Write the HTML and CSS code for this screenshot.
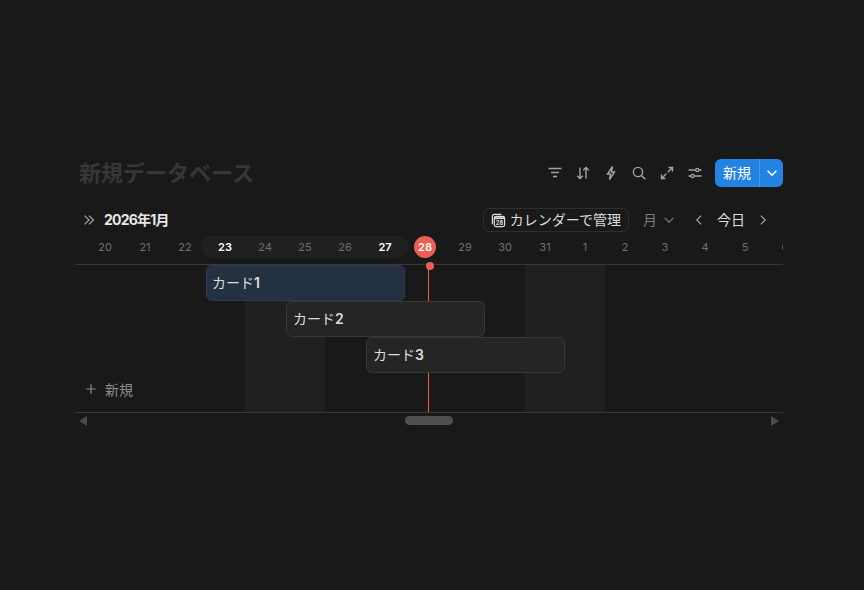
FILE: index.html
```html
<!DOCTYPE html>
<html lang="ja">
<head>
  <meta charset="UTF-8" />
  <title>新規データベース</title>
  <link rel="stylesheet" href="styles.css">
</head>
<body>

  <div class="view">

    <div class="title-row">
      <h1>新規データベース</h1>
      <div class="tools">
        <span class="tool">
          <svg viewBox="0 0 16 16"><path d="M1.5 3.5h13M4 7.5h8M6 11.5h4"/></svg>
        </span>
        <span class="tool">
          <svg viewBox="0 0 16 16"><path d="M5 2.5v11M2.2 10.7 5 13.5l2.8-2.8M11 13.5v-11M8.2 5.3 11 2.5l2.8 2.8"/></svg>
        </span>
        <span class="tool">
          <svg viewBox="0 0 16 16"><path d="M9.5 1.5 4.5 9h3l-1 5.5L11.5 7h-3z"/></svg>
        </span>
        <span class="tool">
          <svg viewBox="0 0 16 16"><circle cx="7" cy="7" r="4.6"/><path d="m10.4 10.4 3.9 3.9"/></svg>
        </span>
        <span class="tool">
          <svg viewBox="0 0 16 16"><path d="M9.5 2.5h4v4M13.5 2.5l-4.8 4.8M6.5 13.5h-4v-4M2.5 13.5l4.8-4.8"/></svg>
        </span>
        <span class="tool">
          <svg viewBox="0 0 16 16"><path d="M1.5 5h7.2M12 5h2.5M1.5 11H4M7.3 11h7.2"/><circle cx="10.3" cy="5" r="1.6"/><circle cx="5.6" cy="11" r="1.6"/></svg>
        </span>
        <div class="new-btn">
          <span class="new-label">新規</span>
          <span class="new-arrow">
            <svg viewBox="0 0 16 16"><path d="m3 5.5 5 5 5-5"/></svg>
          </span>
        </div>
      </div>
    </div>

    <div class="nav-row">
      <div class="nav-left">
        <svg class="expand" viewBox="0 0 16 16"><path d="m3 3 5 5-5 5M8 3l5 5-5 5"/></svg>
        <span class="month">2026年1月</span>
      </div>
      <div class="nav-right">
        <div class="cal-btn">
          <svg viewBox="0 0 16 16">
            <path d="M1.5 12V3.5q0-2 2-2H11"/>
            <rect x="3.5" y="3.5" width="11" height="11" rx="2"/>
            <path class="cal-head" d="M3.5 5.5h11"/>
            <text x="9" y="12.8">28</text>
          </svg>
          <span>カレンダーで管理</span>
        </div>
        <div class="scale">
          <span>月</span>
          <svg viewBox="0 0 16 16"><path d="m3 5.5 5 5 5-5"/></svg>
        </div>
        <svg class="step" viewBox="0 0 16 16"><path d="M10.5 3 5.5 8l5 5"/></svg>
        <span class="today-btn">今日</span>
        <svg class="step" viewBox="0 0 16 16"><path d="m5.5 3 5 5-5 5"/></svg>
      </div>
    </div>

    <div class="days">
      <span class="day">20</span>
      <span class="day">21</span>
      <span class="day">22</span>
      <div class="range">
        <span class="day strong">23</span>
        <span class="day">24</span>
        <span class="day">25</span>
        <span class="day">26</span>
        <span class="day strong">27</span>
      </div>
      <span class="day today"><b>28</b></span>
      <span class="day">29</span>
      <span class="day">30</span>
      <span class="day">31</span>
      <span class="day">1</span>
      <span class="day">2</span>
      <span class="day">3</span>
      <span class="day">4</span>
      <span class="day">5</span>
      <span class="day">6</span>
    </div>

    <div class="chart">
      <div class="weekend w1"></div>
      <div class="weekend w2"></div>
      <div class="card card-1 selected">カード<b>1</b></div>
      <div class="card card-2">カード<b>2</b></div>
      <div class="card card-3">カード<b>3</b></div>
      <div class="add-row">
        <svg viewBox="0 0 16 16"><path d="M8 2.5v11M2.5 8h11"/></svg>
        <span>新規</span>
      </div>
      <div class="now-line"></div>
    </div>

    <div class="scrollbar">
      <span class="arrow left"></span>
      <div class="track"><span class="thumb"></span></div>
      <span class="arrow right"></span>
    </div>

  </div>

</body>
</html>
```

FILE: styles.css
```css
* {
  box-sizing: border-box;
}
body {
  margin: 0;
  height: 590px;
  overflow: hidden;
  background: #191919;
  font-family: Inter, "Noto Sans CJK JP", sans-serif;
  color: #d4d4d4;
}
svg {
  fill: none;
  stroke: currentColor;
  stroke-width: 1.4;
  display: block;
}
.view {
  width: 708px;
  margin-left: 75px;
  padding-top: 159px;
}

/* title + toolbar */
.title-row {
  display: flex;
  justify-content: space-between;
  align-items: center;
  height: 28px;
  padding-left: 4px;
}
h1 {
  margin: 0;
  font-size: 22px;
  line-height: 28px;
  font-weight: 700;
  color: #373737;
}
.tools {
  display: flex;
  align-items: center;
}
.tool {
  width: 28px;
  height: 28px;
  display: flex;
  align-items: center;
  justify-content: center;
  color: #a3a3a3;
}
.tool svg {
  width: 16px;
  height: 16px;
}
.new-btn {
  display: flex;
  height: 28px;
  margin-left: 6px;
  background: #2383e2;
  border-radius: 6px;
  color: #fff;
  font-size: 14px;
}
.new-label {
  width: 44px;
  line-height: 27px;
  text-align: center;
}
.new-arrow {
  width: 24px;
  display: flex;
  align-items: center;
  justify-content: center;
  border-left: 1px solid #4a9bea;
}
.new-arrow svg {
  width: 14px;
  height: 14px;
  stroke-width: 1.8;
}

/* month nav */
.nav-row {
  display: flex;
  justify-content: space-between;
  align-items: center;
  height: 24px;
  margin-top: 21px;
}
.nav-left {
  display: flex;
  align-items: center;
  gap: 8px;
  padding-left: 7px;
}
.expand {
  width: 14px;
  height: 14px;
  color: #a3a3a3;
}
.month {
  font-size: 14px;
  line-height: 22px;
  font-weight: 700;
  letter-spacing: -0.8px;
  color: #e6e6e6;
}
.nav-right {
  display: flex;
  align-items: center;
  padding-right: 13px;
}
.cal-btn {
  display: flex;
  align-items: center;
  gap: 4px;
  height: 24px;
  padding: 0 7px 0 7px;
  border: 1px solid #2e2e2e;
  border-radius: 6px;
  font-size: 14px;
  line-height: 20px;
  color: #dcdcdc;
  white-space: nowrap;
}
.cal-btn svg {
  width: 15px;
  height: 15px;
  stroke-width: 1.3;
}
.cal-head {
  stroke-width: 2;
}
.cal-btn text {
  fill: currentColor;
  stroke: none;
  font-size: 6px;
  font-weight: 700;
  text-anchor: middle;
}
.scale {
  display: flex;
  align-items: center;
  gap: 5px;
  margin-left: 14px;
  font-size: 14px;
  line-height: 20px;
  color: #7f7f7f;
}
.scale svg {
  width: 14px;
  height: 14px;
}
.step {
  width: 14px;
  height: 14px;
  color: #a3a3a3;
}
.scale + .step {
  margin-left: 16px;
}
.today-btn {
  width: 28px;
  margin: 0 11px;
  font-size: 14px;
  line-height: 20px;
  text-align: center;
  color: #dcdcdc;
  white-space: nowrap;
}

/* date header */
.days {
  display: flex;
  align-items: center;
  height: 33px;
  padding: 4px 0 6px 10px;
  overflow: hidden;
  border-bottom: 1px solid #373737;
}
.day {
  flex: 0 0 40px;
  text-align: center;
  font-size: 11px;
  line-height: 22px;
  color: #6f6f6f;
}
.range {
  flex: none;
  display: flex;
  margin: 0 -4px;
  padding: 0 4px;
  border-radius: 11px;
  background: #202020;
}
.day.strong {
  font-weight: 600;
  color: #fff;
}
.today b {
  display: block;
  width: 22px;
  height: 22px;
  margin: 0 auto;
  border-radius: 50%;
  background: #eb5f55;
  color: #fff;
  font-weight: 600;
}

/* chart body */
.chart {
  position: relative;
  display: grid;
  grid-template-columns: repeat(17, 40px);
  grid-template-rows: 36px 36px 36px 39px;
  padding-left: 10px;
  height: 148px;
  border-bottom: 1px solid #373737;
}
.weekend {
  grid-row: 1 / -1;
  background: #202020;
}
.w1 {
  grid-column: 5 / 7;
}
.w2 {
  grid-column: 12 / 14;
}
.card {
  z-index: 2;
  margin-left: 1px;
  padding: 0 0 2px 6px;
  display: flex;
  align-items: center;
  border: 1px solid #373737;
  border-radius: 6px;
  background: #252525;
  font-size: 14px;
  color: #dcdcdc;
}
.card b {
  font-weight: 600;
}
.card-1 {
  grid-column: 4 / 9;
  grid-row: 1;
}
.card-2 {
  grid-column: 6 / 11;
  grid-row: 2;
}
.card-3 {
  grid-column: 8 / 13;
  grid-row: 3;
}
.selected {
  padding-left: 5px;
  background: #243142;
  border-color: #2c3a4b;
}
.add-row {
  grid-column: 1 / 4;
  grid-row: 4;
  z-index: 2;
  margin-left: -10px;
  padding: 0 0 7px 9px;
  display: flex;
  align-items: center;
  gap: 7px;
  font-size: 14px;
  color: #8c8c8c;
}
.add-row svg {
  width: 14px;
  height: 14px;
}
.now-line {
  position: absolute;
  left: 353px;
  top: 0;
  bottom: 0;
  width: 1px;
  z-index: 1;
  background: #eb5f55;
}
.now-line::before {
  content: "";
  position: absolute;
  left: -2px;
  top: -3px;
  width: 8px;
  height: 8px;
  border-radius: 50%;
  background: #eb5f55;
}

/* horizontal scrollbar */
.scrollbar {
  display: flex;
  align-items: center;
  height: 15px;
  padding: 0 4px;
}
.arrow {
  width: 0;
  height: 0;
  border-top: 5px solid transparent;
  border-bottom: 5px solid transparent;
}
.arrow.left {
  border-right: 8px solid #4a4a4a;
}
.arrow.right {
  border-left: 8px solid #4a4a4a;
}
.track {
  flex: 1;
  padding-left: 318px;
  display: flex;
}
.thumb {
  width: 48px;
  height: 9px;
  border-radius: 5px;
  background: #4f4f4f;
}
```
